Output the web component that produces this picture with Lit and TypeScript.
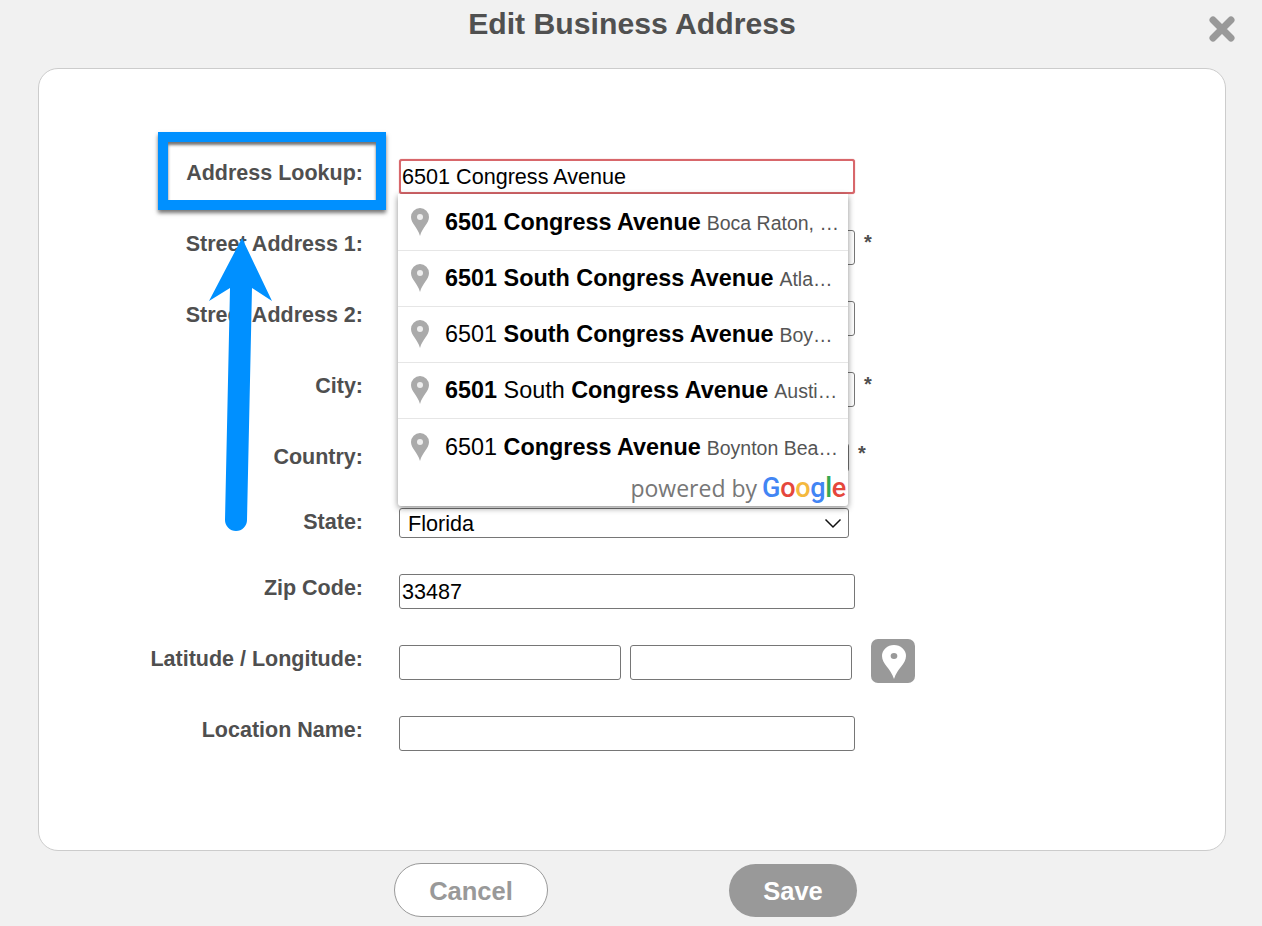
import { LitElement, html, css, svg } from "lit";
import { customElement } from "lit/decorators.js";

const pin = (fill: string, dot: string) => svg`<svg width="18" height="28" viewBox="0 0 18 28"><path fill=${fill} d="M9 0a9 9 0 0 1 9 9c0 6.500-6.500 10-9 19C6.500 19 0 15.500 0 9a9 9 0 0 1 9-9z"/><circle cx="9" cy="9" r="3" fill=${dot}/></svg>`;

const suggestions: Array<{ parts: Array<[string, boolean]>; rest: string }> = [
  { parts: [["6501 Congress Avenue", true]], rest: "Boca Raton, FL, USA" },
  { parts: [["6501 South Congress Avenue", true]], rest: "Atlantis, FL, USA" },
  { parts: [["6501 ", false], ["South Congress Avenue", true]], rest: "Boynton Beach, FL" },
  { parts: [["6501", true], [" South ", false], ["Congress Avenue", true]], rest: "Austin, TX, USA" },
  { parts: [["6501 ", false], ["Congress Avenue", true]], rest: "Boynton Beach, FL, USA" },
];

@customElement("app-root")
export class AppRoot extends LitElement {
  static styles = css`
    :host {
      display: block;
      position: relative;
      width: 1262px;
      height: 926px;
      overflow: hidden;
      background: #f1f1f1;
      font-family: "Liberation Sans", Arial, sans-serif;
      color: #4f4f4f;
    }
    .header {
      height: 68px;
      display: flex;
      justify-content: center;
      padding-left: 2px;
      box-sizing: border-box;
    }
    h1 {
      margin: 0;
      font-size: 30.200px;
      font-weight: 700;
      line-height: 48px;
      color: #505050;
    }
    .close {
      position: absolute;
      left: 1209px;
      top: 16px;
      display: block;
    }
    .card {
      margin: 0 36px 0 38px;
      height: 783px;
      box-sizing: border-box;
      background: #fff;
      border: 1px solid #ccc;
      border-radius: 20px;
      padding: 90px 0 0 0;
      display: flex;
      flex-direction: column;
      gap: 36px;
    }
    .row {
      display: flex;
      align-items: flex-start;
    }
    .label {
      width: 324px;
      flex: none;
      text-align: right;
      font-size: 21.500px;
      font-weight: 700;
      line-height: 29px;
      color: #4f4f4f;
    }
    .ctl {
      margin-left: 36px;
      display: flex;
      align-items: flex-start;
    }
    input, select {
      box-sizing: border-box;
      font-family: "Liberation Sans", Arial, sans-serif;
      font-size: 21.600px;
      color: #000;
      background: #fff;
      border: 1px solid #767676;
      border-radius: 3px;
      outline: none;
      margin: 0;
    }
    input {
      width: 456px;
      height: 35px;
      padding: 0 2px;
    }
    input.focus {
      border: 2px solid #d8676b;
      padding: 0 1px;
      box-shadow: 0 0 1px #d8676b;
    }
    input.half {
      width: 222px;
    }
    .pair {
      gap: 9px;
    }
    .star {
      margin-left: 9px;
      font-size: 20px;
      font-weight: 700;
      line-height: 24px;
      color: #4f4f4f;
    }
    .star.sel {
      margin-left: 9px;
      line-height: 20px;
    }
    .selwrap {
      position: relative;
      display: block;
      height: 30px;
    }
    select {
      display: block;
      width: 450px;
      height: 30px;
      padding: 0 8px;
      appearance: none;
      -webkit-appearance: none;
    }
    select.short {
      height: 29px;
    }
    .chev {
      position: absolute;
      right: 7px;
      top: 10px;
      pointer-events: none;
    }
    .locate {
      margin: -6px 0 -3px 10px;
      width: 44px;
      height: 44px;
      border: none;
      padding: 2px 0 0 1px;
      box-sizing: border-box;
      border-radius: 7px;
      background: #999;
      display: flex;
      align-items: center;
      justify-content: center;
    }
    .footer {
      display: flex;
      margin: 12px 0 0 394px;
      gap: 181px;
      align-items: flex-start;
    }
    .btn {
      box-sizing: border-box;
      height: 54px;
      border-radius: 27px;
      font-family: "Liberation Sans", Arial, sans-serif;
      font-size: 25.500px;
      font-weight: 700;
      padding: 2px 0 0 0;
    }
    .cancel {
      width: 154px;
      background: #fff;
      border: 1px solid #999;
      color: #999;
    }
    .save {
      width: 128px;
      margin-top: 1px;
      height: 53px;
      background: #999;
      border: none;
      color: #fff;
    }
    .drop {
      position: absolute;
      left: 398px;
      top: 194px;
      width: 450px;
      height: 312px;
      box-sizing: border-box;
      padding-top: 1px;
      background: #fff;
      box-shadow: 0 2px 6px rgba(0, 0, 0, 0.45);
      border-radius: 0 0 3px 3px;
      display: flex;
      flex-direction: column;
    }
    .item {
      box-sizing: border-box;
      height: 56px;
      flex: none;
      display: flex;
      align-items: center;
      padding: 0 8px 0 13px;
      border-bottom: 1px solid #e6e6e6;
    }
    .item:nth-child(5) {
      border-bottom: none;
    }
    .item svg {
      flex: none;
      margin: -1px 16px 0 0;
    }
    .text {
      min-width: 0;
      white-space: nowrap;
      overflow: hidden;
      text-overflow: ellipsis;
      font-size: 19.500px;
      color: #555;
      line-height: 28px;
    }
    .main {
      font-size: 23.400px;
      color: #000;
      margin-right: 6px;
    }
    .main b {
      font-weight: 700;
    }
    .powered {
      flex: 1;
      display: flex;
      justify-content: flex-end;
      align-items: center;
      gap: 5px;
      padding-right: 2px;
      font-family: "Open Sans", sans-serif;
      font-size: 23px;
      color: #777;
      margin-top: -5px;
    }
    .google {
      font-family: Roboto, sans-serif;
      font-size: 27px;
      font-weight: 500;
      letter-spacing: -0.300px;
    }
    .g { color: #4285f4; }
    .r { color: #e5473c; }
    .y { color: #f4b93e; }
    .gr { color: #34a853; }
    .annot {
      position: absolute;
      left: 0;
      top: 0;
      pointer-events: none;
    }
    .box {
      position: absolute;
      left: 158px;
      top: 132px;
      width: 228px;
      height: 78px;
      box-sizing: border-box;
      border: 10px solid #0090ff;
      box-shadow: 0 3px 4px rgba(0, 0, 0, 0.55), inset 0 3px 3px rgba(0, 0, 0, 0.55);
      pointer-events: none;
    }
  `;

  private field(label: string, star = false) {
    return html`<div class="row">
      <div class="label">${label}</div>
      <div class="ctl"><input type="text" />${star ? html`<span class="star">*</span>` : ""}</div>
    </div>`;
  }

  render() {
    return html`
      <div class="header"><h1>Edit Business Address</h1></div>
      <svg class="close" width="26" height="26" viewBox="0 0 26 26">
        <path d="M4 4L22 22M22 4L4 22" stroke="#999" stroke-width="7" stroke-linecap="round" fill="none" />
      </svg>
      <div class="card">
        <div class="row">
          <div class="label">Address Lookup:</div>
          <div class="ctl"><input class="focus" type="text" .value=${"6501 Congress Avenue"} /></div>
        </div>
        ${this.field("Street Address 1:", true)}
        ${this.field("Street Address 2:")}
        ${this.field("City:", true)}
        <div class="row">
          <div class="label">Country:</div>
          <div class="ctl">
            <select class="short"><option>United States</option></select>
            <span class="star sel">*</span>
          </div>
        </div>
        <div class="row">
          <div class="label">State:</div>
          <div class="ctl">
            <div class="selwrap">
              <select><option>Florida</option></select>
              <svg class="chev" width="18" height="11" viewBox="0 0 18 11">
                <path d="M1.500 1.500L9 9L16.500 1.500" stroke="#111" stroke-width="1.500" fill="none" />
              </svg>
            </div>
          </div>
        </div>
        <div class="row">
          <div class="label">Zip Code:</div>
          <div class="ctl"><input type="text" .value=${"33487"} /></div>
        </div>
        <div class="row">
          <div class="label">Latitude / Longitude:</div>
          <div class="ctl pair">
            <input class="half" type="text" />
            <input class="half" type="text" />
            <button class="locate" aria-label="Locate">
              <svg width="24" height="34" viewBox="0 0 18 28" preserveAspectRatio="none"><path fill="#fff" d="M9 0a9 9 0 0 1 9 9c0 6.500-6.500 10-9 19C6.500 19 0 15.500 0 9a9 9 0 0 1 9-9z"/><circle cx="9" cy="9" r="2.500" fill="#999"/></svg>
            </button>
          </div>
        </div>
        ${this.field("Location Name:")}
      </div>
      <div class="footer">
        <button class="btn cancel">Cancel</button>
        <button class="btn save">Save</button>
      </div>
      <div class="drop">
        ${suggestions.map(
          (s) => html`<div class="item">
            ${pin("#aaaaaa", "#eeeeee")}
            <div class="text"><span class="main">${s.parts.map(([t, b]) => (b ? html`<b>${t}</b>` : t))}</span>${s.rest}</div>
          </div>`
        )}
        <div class="powered">
          <span>powered by</span>
          <span class="google"><span class="g">G</span><span class="r">o</span><span class="y">o</span><span class="g">g</span><span class="gr">l</span><span class="r">e</span></span>
        </div>
      </div>
      <div class="box"></div>
      <svg class="annot" width="1262" height="926" viewBox="0 0 1262 926">
        <path fill="#0090ff" d="M242 238L272 301L252 288L247 520a11 11 0 0 1-22 0L230 288L209 301z" />
      </svg>
    `;
  }
}
